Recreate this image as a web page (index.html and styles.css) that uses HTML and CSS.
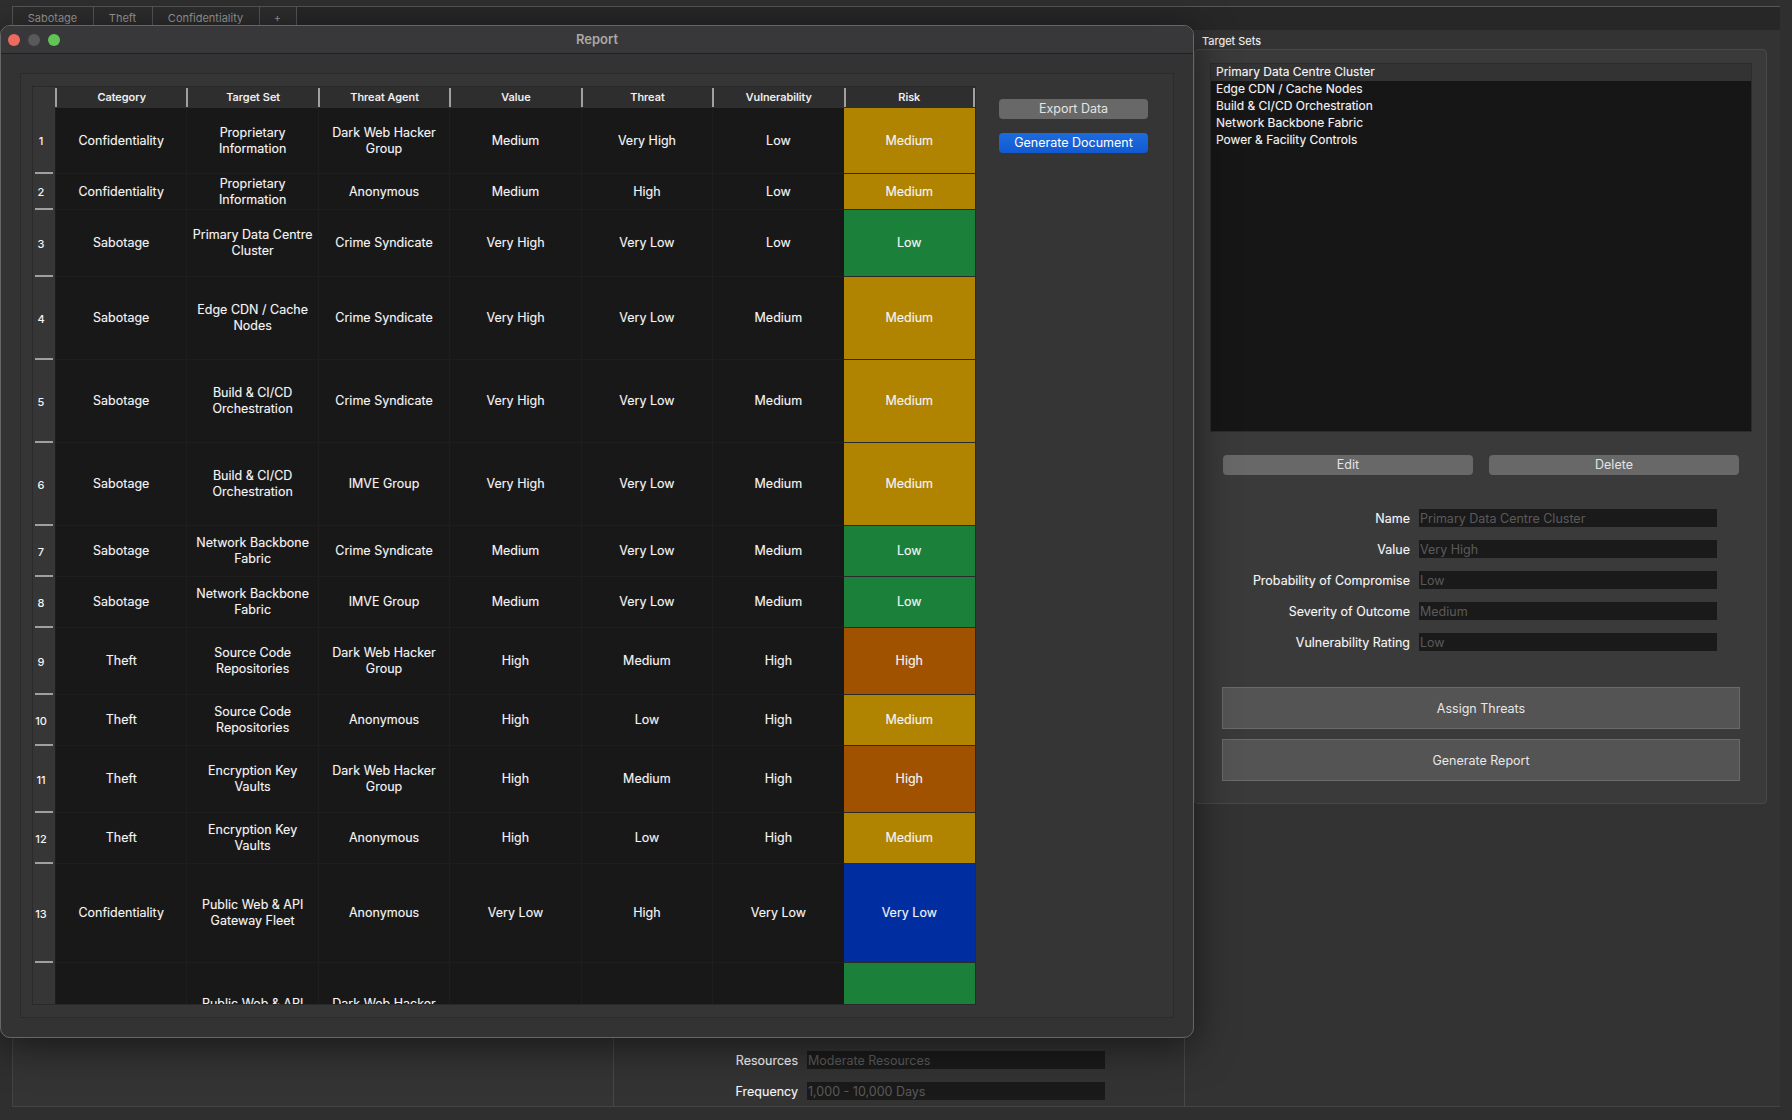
FILE: index.html
```html
<!DOCTYPE html>
<html lang="en">
<head>
<meta charset="utf-8">
<title>Report</title>
<link rel="stylesheet" href="styles.css">
</head>
<body>
<div class="desktop">
  <div class="tabs">
    <div class="tab tab-a">Sabotage</div>
    <div class="tab tab-b">Theft</div>
    <div class="tab tab-c">Confidentiality</div>
    <div class="tab tab-d">+</div>
  </div>
  <div class="panes">
    <div class="pane pane-left"></div>
    <div class="pane pane-mid">
      <div class="agent-form">
        <div class="f-label">Resources</div><div class="field">Moderate Resources</div>
        <div class="f-label">Frequency</div><div class="field">1,000 - 10,000 Days</div>
      </div>
    </div>
    <div class="pane pane-right">
      <div class="group-title">Target Sets</div>
      <div class="group">
        <div class="list">
          <div class="list-item selected">Primary Data Centre Cluster</div>
          <div class="list-item">Edge CDN / Cache Nodes</div>
          <div class="list-item">Build &amp; CI/CD Orchestration</div>
          <div class="list-item">Network Backbone Fabric</div>
          <div class="list-item">Power &amp; Facility Controls</div>
        </div>
        <div class="pair">
          <div class="btn">Edit</div>
          <div class="btn">Delete</div>
        </div>
        <div class="target-form">
          <div class="f-label">Name</div><div class="field">Primary Data Centre Cluster</div>
          <div class="f-label">Value</div><div class="field">Very High</div>
          <div class="f-label">Probability of Compromise</div><div class="field">Low</div>
          <div class="f-label">Severity of Outcome</div><div class="field">Medium</div>
          <div class="f-label">Vulnerability Rating</div><div class="field">Low</div>
        </div>
        <div class="big-btn big-first">Assign Threats</div>
        <div class="big-btn">Generate Report</div>
      </div>
    </div>
  </div>
</div>

<div class="window">
  <div class="titlebar">
    <div class="lights"><span class="light red"></span><span class="light grey"></span><span class="light green"></span></div>
    <div class="title">Report</div>
  </div>
  <div class="win-body">
    <div class="report-panel">
      <div class="table">
        <div class="row head">
          <div class="corner"></div>
          <div class="th">Category</div><div class="th">Target Set</div><div class="th">Threat Agent</div><div class="th">Value</div><div class="th">Threat</div><div class="th">Vulnerability</div><div class="th">Risk</div>
        </div>
        <div class="row h66"><div class="rh">1</div><div class="td">Confidentiality</div><div class="td">Proprietary<br>Information</div><div class="td">Dark Web Hacker<br>Group</div><div class="td">Medium</div><div class="td">Very High</div><div class="td">Low</div><div class="td medium">Medium</div></div>
        <div class="row h36"><div class="rh">2</div><div class="td">Confidentiality</div><div class="td">Proprietary<br>Information</div><div class="td">Anonymous</div><div class="td">Medium</div><div class="td">High</div><div class="td">Low</div><div class="td medium">Medium</div></div>
        <div class="row h67"><div class="rh">3</div><div class="td">Sabotage</div><div class="td">Primary Data Centre<br>Cluster</div><div class="td">Crime Syndicate</div><div class="td">Very High</div><div class="td">Very Low</div><div class="td">Low</div><div class="td low">Low</div></div>
        <div class="row h83"><div class="rh">4</div><div class="td">Sabotage</div><div class="td">Edge CDN / Cache<br>Nodes</div><div class="td">Crime Syndicate</div><div class="td">Very High</div><div class="td">Very Low</div><div class="td">Medium</div><div class="td medium">Medium</div></div>
        <div class="row h83"><div class="rh">5</div><div class="td">Sabotage</div><div class="td">Build &amp; CI/CD<br>Orchestration</div><div class="td">Crime Syndicate</div><div class="td">Very High</div><div class="td">Very Low</div><div class="td">Medium</div><div class="td medium">Medium</div></div>
        <div class="row h83"><div class="rh">6</div><div class="td">Sabotage</div><div class="td">Build &amp; CI/CD<br>Orchestration</div><div class="td">IMVE Group</div><div class="td">Very High</div><div class="td">Very Low</div><div class="td">Medium</div><div class="td medium">Medium</div></div>
        <div class="row h51"><div class="rh">7</div><div class="td">Sabotage</div><div class="td">Network Backbone<br>Fabric</div><div class="td">Crime Syndicate</div><div class="td">Medium</div><div class="td">Very Low</div><div class="td">Medium</div><div class="td low">Low</div></div>
        <div class="row h51"><div class="rh">8</div><div class="td">Sabotage</div><div class="td">Network Backbone<br>Fabric</div><div class="td">IMVE Group</div><div class="td">Medium</div><div class="td">Very Low</div><div class="td">Medium</div><div class="td low">Low</div></div>
        <div class="row h67"><div class="rh">9</div><div class="td">Theft</div><div class="td">Source Code<br>Repositories</div><div class="td">Dark Web Hacker<br>Group</div><div class="td">High</div><div class="td">Medium</div><div class="td">High</div><div class="td high">High</div></div>
        <div class="row h51"><div class="rh">10</div><div class="td">Theft</div><div class="td">Source Code<br>Repositories</div><div class="td">Anonymous</div><div class="td">High</div><div class="td">Low</div><div class="td">High</div><div class="td medium">Medium</div></div>
        <div class="row h67"><div class="rh">11</div><div class="td">Theft</div><div class="td">Encryption Key<br>Vaults</div><div class="td">Dark Web Hacker<br>Group</div><div class="td">High</div><div class="td">Medium</div><div class="td">High</div><div class="td high">High</div></div>
        <div class="row h51"><div class="rh">12</div><div class="td">Theft</div><div class="td">Encryption Key<br>Vaults</div><div class="td">Anonymous</div><div class="td">High</div><div class="td">Low</div><div class="td">High</div><div class="td medium">Medium</div></div>
        <div class="row h99"><div class="rh">13</div><div class="td">Confidentiality</div><div class="td">Public Web &amp; API<br>Gateway Fleet</div><div class="td">Anonymous</div><div class="td">Very Low</div><div class="td">High</div><div class="td">Very Low</div><div class="td vlow">Very Low</div></div>
        <div class="row h99"><div class="rh rh-clip"></div><div class="td"></div><div class="td">Public Web &amp; API<br>Gateway Fleet</div><div class="td">Dark Web Hacker<br>Group</div><div class="td"></div><div class="td"></div><div class="td"></div><div class="td low"></div></div>
      </div>
      <div class="side">
        <div class="btn side-btn">Export Data</div>
        <div class="btn side-btn primary">Generate Document</div>
      </div>
    </div>
  </div>
</div>
</body>
</html>
```
FILE: styles.css
```css
* { box-sizing: border-box; }
html, body { margin: 0; height: 100%; overflow: hidden; }
body {
  background: #2f2f2f;
  font-family: Inter, "Liberation Sans", sans-serif;
  font-size: 12.5px;
  color: #f4f4f4;
  position: relative;
}
.desktop {
  height: 1120px;
  padding: 6px 12px 13px 12px;
  display: flex;
  flex-direction: column;
}
.tabs {
  height: 24px;
  display: flex;
  border-top: 1px solid #565656;
  background: #272727;
  flex: none;
}
.tab {
  height: 19px;
  border-left: 1px solid #565656;
  color: #9a9a9a;
  font-size: 11px;
  line-height: 22px;
  text-align: center;
  padding-right: 1px;
  background: #2d2d2d;
}
.tab-a { width: 81px; }
.tab-b { width: 59px; }
.tab-c { width: 107px; }
.tab-d { width: 38px; border-right: 1px solid #565656; }
.panes {
  flex: 1;
  display: grid;
  grid-template-columns: 601px 572px 595px;
  border-bottom: 1px solid #444;
}
.pane { background: #333; min-width: 0; }
.pane-left { background: linear-gradient(#262626, #343434 90%); border-left: 1px solid #444; }
.pane-mid {
  border-left: 1px solid #484848;
  border-right: 1px solid #484848;
  display: flex;
  align-items: flex-end;
  padding-bottom: 6px;
}
.agent-form {
  display: grid;
  grid-template-columns: 184px 298px;
  column-gap: 9px;
  row-gap: 13px;
  grid-auto-rows: 18px;
}
.f-label {
  text-align: right;
  line-height: 20px;
  white-space: nowrap;
  font-size: 12.5px;
  text-shadow: 0 0 1px rgba(255, 255, 255, .3);
}
.field {
  background: #1a1a1a;
  color: #5a5a5a;
  line-height: 20px;
  height: 18px;
  padding-left: 1px;
  font-size: 12.5px;
  white-space: nowrap;
  overflow: hidden;
}
.pane-right { padding: 0 13px 0 9px; }
.group-title {
  height: 19px;
  padding: 3px 0 0 8px;
  font-size: 11px;
  line-height: 16px;
  text-shadow: 0 0 1px rgba(255, 255, 255, .3);
}
.group {
  height: 755px;
  background: #3a3a3a;
  border: 1px solid #484848;
  border-radius: 4px;
  padding: 13px 14px 0 15px;
}
.list { height: 369px; background: #161616; border: 1px solid #2c2c2c; }
.list-item {
  height: 17px;
  line-height: 16px;
  padding-left: 5px;
  font-size: 12px;
  text-shadow: 0 0 1px rgba(255, 255, 255, .3);
}
.list-item.selected { background: #333; }
.pair { display: flex; gap: 16px; margin: 23px 13px 0 13px; }
.pair .btn { flex: 1; }
.btn {
  height: 20px;
  line-height: 20px;
  border-radius: 4px;
  background: #686868;
  color: #e4e4e4;
  text-align: center;
  font-size: 12.5px;
}
.target-form {
  display: grid;
  grid-template-columns: 200px 298px;
  column-gap: 9px;
  row-gap: 13px;
  grid-auto-rows: 18px;
  margin-top: 34px;
}
.big-btn {
  height: 42px;
  line-height: 41px;
  margin: 10px 12px 0 12px;
  background: #545454;
  border: 1px solid #6a6a6a;
  text-align: center;
  color: #e8e8e8;
  font-size: 12.5px;
}
.big-first { margin-top: 36px; }

.window {
  position: absolute;
  left: 0;
  top: 25px;
  width: 1194px;
  height: 1013px;
  background: #333;
  border: 1px solid #666;
  border-radius: 10px;
  box-shadow: 0 8px 40px rgba(0, 0, 0, .55);
  overflow: hidden;
}
.titlebar {
  height: 28px;
  background: #38383a;
  border-bottom: 1px solid #202020;
  position: relative;
  text-align: center;
}
.lights { position: absolute; left: 7px; top: 8px; display: flex; gap: 8px; }
.light { width: 12px; height: 12px; border-radius: 50%; }
.red { background: #ee6a5f; }
.grey { background: #59595c; }
.green { background: #61c554; }
.title { line-height: 26px; font-size: 13px; font-weight: 600; color: #a8a8a8; }
.win-body { padding: 19px; }
.report-panel {
  height: 945px;
  border: 1px solid #2b2b2b;
  background: #353535;
  padding: 13px 12px 12px 12px;
  display: flex;
}
.table {
  width: 942px;
  height: 917px;
  overflow: hidden;
  flex: none;
  background: #181818;
  box-shadow: 0 0 0 1px #2a2a2a;
}
.row { display: grid; grid-template-columns: 22px repeat(7, 1fr); }
.head { height: 21px; background: #2e2e2e; }
.corner, .rh { background: #363636; }
.th {
  font-size: 11px;
  font-weight: 500;
  text-align: center;
  line-height: 18px;
  border-left: 2px solid #a0a0a0;
  height: 19px;
  margin-top: 1px;
  text-shadow: 0 0 1px rgba(255, 255, 255, .3);
}
.th:last-child { border-right: 2px solid #a0a0a0; }
.rh {
  font-size: 11px;
  font-weight: 500;
  padding-right: 6px;
  display: flex;
  align-items: center;
  justify-content: center;
  position: relative;
}
.rh::after {
  content: "";
  position: absolute;
  left: 2px;
  right: 2px;
  bottom: 0;
  height: 2px;
  background: #a0a0a0;
}
.td {
  display: flex;
  align-items: center;
  justify-content: center;
  text-align: center;
  line-height: 16px;
  background: #181818;
  border-left: 1px solid #1e1e1e;
  border-bottom: 1px solid #1e1e1e;
  text-shadow: 0 0 1px rgba(255, 255, 255, .3);
}
.medium { background: #b08400; border: 0; border-bottom: 1px solid #2a2a2a; }
.low { background: #1b803a; border: 0; border-bottom: 1px solid #2a2a2a; }
.high { background: #a05200; border: 0; border-bottom: 1px solid #2a2a2a; }
.vlow { background: #002ea0; border: 0; border-bottom: 1px solid #2a2a2a; }
.h36 { height: 36px; }
.h51 { height: 51px; }
.h66 { height: 66px; }
.h67 { height: 67px; }
.h83 { height: 83px; }
.h99 { height: 99px; }
.side { display: flex; flex-direction: column; gap: 14px; margin: 12px 0 0 24px; }
.side-btn { width: 149px; }
.primary { background: linear-gradient(#1c6cdf, #1259d0); color: #fff; }
```
